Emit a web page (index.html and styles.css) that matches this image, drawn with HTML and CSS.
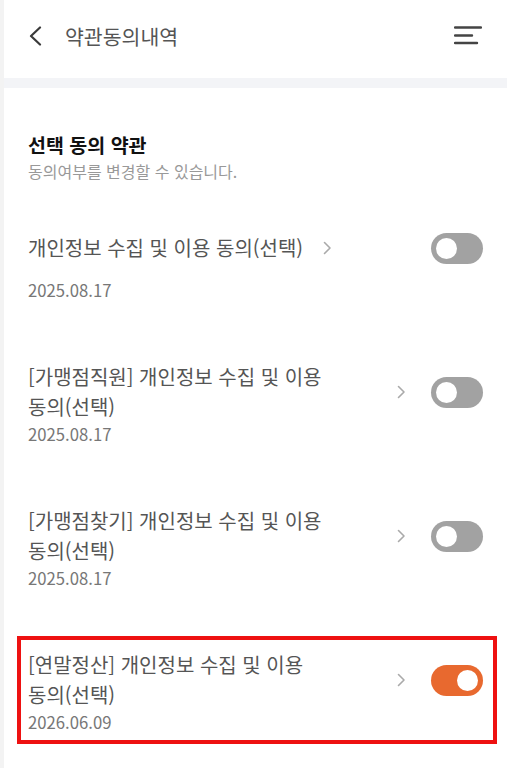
FILE: index.html
```html
<!DOCTYPE html>
<html lang="ko">
<head>
<meta charset="utf-8">
<title>약관동의내역</title>
<link rel="stylesheet" href="styles.css">
</head>
<body>
<div class="page">
  <header class="topbar">
    <svg class="back" width="14" height="20" viewBox="0 0 14 20"><path d="M12 1.5 L3 10 L12 18.5" fill="none" stroke="#3a3a3a" stroke-width="2.2" stroke-linecap="round" stroke-linejoin="round"/></svg>
    <h1 class="title">약관동의내역</h1>
    <svg class="menu" width="28" height="20" viewBox="0 0 28 20"><path d="M1 2.5 H27 M1 10.5 H18 M1 18 H23" fill="none" stroke="#444" stroke-width="2.4" stroke-linecap="round"/></svg>
  </header>
  <div class="band"></div>
  <section class="section">
    <h2 class="sec-title">선택 동의 약관</h2>
    <p class="sec-sub">동의여부를 변경할 수 있습니다.</p>
  </section>
  <ul class="list">
    <li class="item">
      <div class="row">
        <span class="label">개인정보 수집 및 이용 <span class="nw">동의(선택)</span></span>
        <svg class="chev" width="9" height="14" viewBox="0 0 9 14"><path d="M1.5 1.5 L7 7 L1.5 12.5" fill="none" stroke="#aaa" stroke-width="1.6" stroke-linecap="round" stroke-linejoin="round"/></svg>
        <span class="toggle"><span class="knob"></span></span>
      </div>
      <div class="date">2025.08.17</div>
    </li>
    <li class="item">
      <div class="row">
        <span class="label">[가맹점직원] 개인정보 수집 및 이용 <span class="nw">동의(선택)</span></span>
        <svg class="chev" width="9" height="14" viewBox="0 0 9 14"><path d="M1.5 1.5 L7 7 L1.5 12.5" fill="none" stroke="#aaa" stroke-width="1.6" stroke-linecap="round" stroke-linejoin="round"/></svg>
        <span class="toggle"><span class="knob"></span></span>
      </div>
      <div class="date">2025.08.17</div>
    </li>
    <li class="item">
      <div class="row">
        <span class="label">[가맹점찾기] 개인정보 수집 및 이용 <span class="nw">동의(선택)</span></span>
        <svg class="chev" width="9" height="14" viewBox="0 0 9 14"><path d="M1.5 1.5 L7 7 L1.5 12.5" fill="none" stroke="#aaa" stroke-width="1.6" stroke-linecap="round" stroke-linejoin="round"/></svg>
        <span class="toggle"><span class="knob"></span></span>
      </div>
      <div class="date">2025.08.17</div>
    </li>
    <li class="item highlighted">
      <div class="row">
        <span class="label">[연말정산] 개인정보 수집 및 이용 <span class="nw">동의(선택)</span></span>
        <svg class="chev" width="9" height="14" viewBox="0 0 9 14"><path d="M1.5 1.5 L7 7 L1.5 12.5" fill="none" stroke="#aaa" stroke-width="1.6" stroke-linecap="round" stroke-linejoin="round"/></svg>
        <span class="toggle on"><span class="knob"></span></span>
      </div>
      <div class="date">2026.06.09</div>
    </li>
  </ul>
</div>
</body>
</html>
```

FILE: styles.css
```css
* { box-sizing: border-box; }
html, body {
  margin: 0;
  padding: 0;
  background: #fff;
}
body {
  font-family: "Noto Sans CJK KR", "Noto Sans", sans-serif;
  color: #555;
}
.page {
  width: 507px;
  min-height: 768px;
  border-left: 4px solid #f3f3f3;
  overflow: hidden;
}
.topbar {
  height: 78px;
  display: flex;
  align-items: center;
  padding: 0 25px 6px 24px;
}
.back { display: block; }
.title {
  margin: 0 0 0 23px;
  font-size: 20.5px;
  font-weight: 400;
  color: #555;
  line-height: 28px;
  flex: 1;
}
.menu { display: block; margin-top: -3px; }
.band {
  height: 10px;
  background: #f3f4f7;
}
.section {
  padding: 43px 24px 0 24px;
}
.sec-title {
  margin: 0;
  font-size: 19.5px;
  font-weight: 700;
  color: #111;
  line-height: 28px;
}
.sec-sub {
  margin: 1px 0 0;
  font-size: 16px;
  color: #999;
  line-height: 22px;
}
.list {
  list-style: none;
  margin: 0;
  padding: 6px 0 0;
}
.item {
  position: relative;
  padding: 30px 24px 30px 24px;
}
.row {
  min-height: 60px;
  display: flex;
  align-items: center;
}
.label {
  flex: 0 1 auto;
  font-size: 20px;
  line-height: 30px;
  color: #555;
  word-break: keep-all;
}
.nw { white-space: nowrap; }
.chev {
  flex: none;
  display: block;
  margin: 0 25px 0 20px;
}
.toggle {
  flex: none;
  margin-left: auto;
  width: 52px;
  height: 31px;
  border-radius: 16px;
  background: #a2a2a2;
  display: flex;
  align-items: center;
  padding: 0 5px;
}
.knob {
  width: 21px;
  height: 21px;
  border-radius: 50%;
  background: #fff;
}
.toggle.on {
  background: #e8692f;
  justify-content: flex-end;
}
.date {
  font-size: 16.7px;
  line-height: 24px;
  color: #777;
}
.highlighted::after {
  content: "";
  position: absolute;
  left: 13px;
  right: 10px;
  top: 16px;
  bottom: 20px;
  border: 4px solid #ee1111;
  pointer-events: none;
}
```
